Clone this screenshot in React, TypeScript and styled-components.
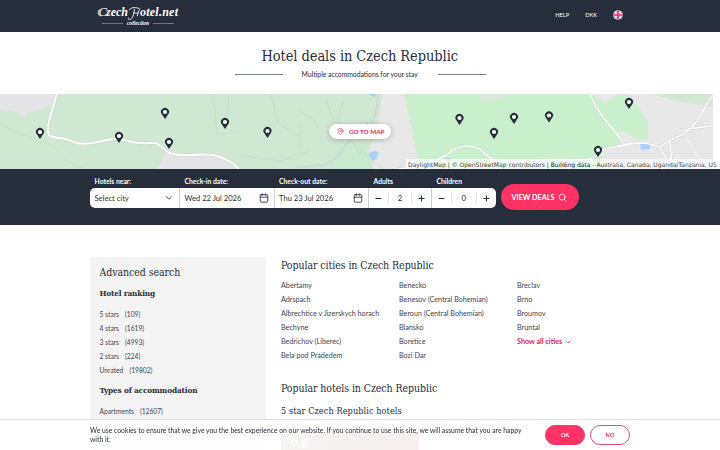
import React from "react";
import styled, { createGlobalStyle } from "styled-components";
import { FiCalendar, FiChevronDown, FiMapPin, FiSearch } from "react-icons/fi";

const navy = "#262d3b";
const pink = "#ff3366";
const serif = `"DejaVu Serif Condensed", "DejaVu Serif", serif`;
const sans = `Lato, "Open Sans", sans-serif`;

const GlobalStyle = createGlobalStyle`
  * {
    box-sizing: border-box;
  }
  body {
    margin: 0;
    height: 450px;
    overflow: hidden;
    background: #fff;
    color: ${navy};
    font-family: ${sans};
    font-size: 7px;
  }
  h1, h2, h3, p, ul {
    margin: 0;
    padding: 0;
    font-weight: 400;
  }
  ul {
    list-style: none;
  }
`;

const Page = styled.div`
  width: 720px;
  height: 450px;
  overflow: hidden;
`;

const Header = styled.header`
  display: flex;
  justify-content: space-between;
  height: 32px;
  padding: 0 97px 0 90px;
  background: ${navy};
`;

const Logo = styled.svg`
  width: 100px;
  height: 32px;
`;

const Nav = styled.nav`
  display: flex;
  align-items: center;
  height: 30px;
  gap: 16px;
  color: #fff;
  font-size: 5.7px;

  span {
    padding-bottom: 1px;
  }
`;

const Flag = styled.svg`
  width: 10px;
  height: 10px;
`;

const Hero = styled.section`
  display: flex;
  flex-direction: column;
  align-items: center;
  height: 62px;
  padding-top: 12px;
`;

const Title = styled.h1`
  width: 197px;
  height: 24px;
  line-height: 24px;
  font-family: ${serif};
  font-stretch: 75%;
  font-size: 14.5px;
  letter-spacing: -0.08px;
  white-space: nowrap;
`;

const Subtitle = styled.div`
  display: flex;
  align-items: center;
  gap: 19px;
  height: 12px;
  padding-top: 1px;
  font-size: 6.8px;

  span {
    width: 117px;
    padding-bottom: 1px;
    white-space: nowrap;
  }

  &::before,
  &::after {
    content: "";
    width: 48px;
    height: 1px;
    background: #777c84;
  }
`;

const MapArea = styled.section`
  position: relative;
  height: 75px;
  overflow: hidden;
`;

const MapDrawing = styled.svg`
  display: block;
`;

const MapButton = styled.button`
  position: absolute;
  left: 329px;
  top: 30px;
  display: flex;
  align-items: center;
  gap: 5px;
  width: 62px;
  height: 15px;
  padding: 0 0 0 8px;
  border: 0;
  border-radius: 8px;
  background: #fff;
  box-shadow: 0 1px 5px rgba(0, 0, 0, 0.25);
  color: #dc2855;
  font: 700 6.3px ${sans};
  white-space: nowrap;
`;

const Attribution = styled.div`
  position: absolute;
  right: 0;
  bottom: 0;
  width: 314px;
  height: 10px;
  padding-left: 2px;
  background: rgba(255, 255, 255, 0.65);
  color: #444;
  font: 6.05px/11px "DejaVu Sans", sans-serif;
  letter-spacing: -0.025px;
  white-space: nowrap;

  b {
    color: #111;
    font-weight: 400;
  }
`;

const SearchBar = styled.section`
  display: flex;
  gap: 5px;
  height: 56px;
  padding: 6px 0 0 90px;
  background: ${navy};
`;

const Fields = styled.div`
  display: flex;
`;

const Field = styled.div<{ $width: number }>`
  width: ${(p) => p.$width}px;

  &:first-child > div {
    border-radius: 5px 0 0 5px;
  }
  &:last-child > div {
    border-radius: 0 5px 5px 0;
    border-right: 0;
  }
`;

const Label = styled.label`
  display: block;
  height: 13px;
  padding-left: 4.5px;
  color: #fff;
  font-size: 6.8px;
  font-weight: 700;
  line-height: 13px;
  white-space: nowrap;
`;

const Input = styled.div`
  display: flex;
  align-items: center;
  justify-content: space-between;
  height: 20px;
  padding: 0 5px 0 4.5px;
  border-right: 1px solid #ccd0d8;
  background: #fff;
  font-size: 7.6px;
  white-space: nowrap;

  svg {
    flex: none;
  }
`;

const Stepper = styled(Input)`
  padding: 0;
`;

const Step = styled.span`
  display: flex;
  justify-content: center;
  width: 19px;
`;

const Count = styled.span`
  flex: 1;
  height: 12px;
  border: solid #e5e7ea;
  border-width: 0 1px;
  line-height: 12px;
  text-align: center;
`;

const DealsButton = styled.button`
  display: flex;
  align-items: center;
  justify-content: center;
  gap: 4px;
  width: 78px;
  height: 26px;
  margin-top: 9px;
  padding: 0;
  border: 0;
  border-radius: 13px;
  background: ${pink};
  color: #fff;
  font: 700 7.2px ${sans};
  white-space: nowrap;
`;

const Content = styled.main`
  display: flex;
  gap: 15px;
  height: 225px;
  padding: 32px 90px 0;
`;

const Sidebar = styled.aside`
  width: 176px;
  padding: 7px 9.5px 0;
  background: #f4f4f5;
`;

const Heading = styled.h2`
  height: 16px;
  line-height: 16px;
  font-family: ${serif};
  font-stretch: 75%;
  font-size: 10.5px;
  letter-spacing: -0.07px;
  white-space: nowrap;
`;

const Filter = styled.h3`
  height: 14px;
  margin: 6px 0 7px;
  line-height: 14px;
  font-family: ${serif};
  font-stretch: 75%;
  font-size: 8.2px;
  font-weight: 700;
  letter-spacing: -0.17px;
  white-space: nowrap;
`;

const FilterRow = styled.li`
  display: flex;
  gap: 6px;
  height: 14px;
  color: #3e444f;
  font-size: 6.7px;
  line-height: 14px;
`;

const Main = styled.div`
  width: 349px;
`;

const Cities = styled.div`
  display: grid;
  grid-template-columns: 118px 118px 1fr;
  margin: 6px 0 17px;
`;

const City = styled.li`
  height: 14px;
  color: #3e444f;
  font-size: 7.2px;
  line-height: 14px;
  white-space: nowrap;
`;

const ShowAll = styled(City)`
  display: flex;
  align-items: center;
  gap: 2px;
  color: #dc2855;
  font-weight: 700;
`;

const HotelHeading = styled.h3`
  height: 14px;
  margin-top: 8px;
  line-height: 14px;
  font-family: ${serif};
  font-stretch: 75%;
  font-size: 9.1px;
  letter-spacing: 0.07px;
`;

const HotelCard = styled.div`
  width: 138px;
  height: 30px;
  margin-top: 15px;
  padding: 3px 10px;
  background: linear-gradient(90deg, #c9b6b3, #b9948e);
  color: #fff;
  font-size: 12px;
  font-weight: 700;
  line-height: 13px;
`;

const CookieBar = styled.div`
  position: fixed;
  left: 0;
  right: 0;
  bottom: 0;
  display: flex;
  gap: 5px;
  height: 31px;
  padding: 5px 90px;
  border-top: 1px solid #dedfe1;
  background: rgba(255, 255, 255, 0.85);

  p {
    flex: none;
    width: 450px;
    padding-top: 1px;
    font-size: 6.8px;
    line-height: 9px;
    white-space: nowrap;
  }
`;

const CookieButton = styled.button<{ $primary?: boolean }>`
  flex: none;
  width: 40px;
  height: 20px;
  padding: 0 0 1px;
  border: 1px solid ${(p) => (p.$primary ? pink : "#de4f75")};
  border-radius: 10px;
  background: ${(p) => (p.$primary ? pink : "#fff")};
  color: ${(p) => (p.$primary ? "#fff" : "#dc2855")};
  font: 700 5.7px ${sans};
`;

const pins = [
  [40, 39], [119, 43], [165, 19], [169, 49], [225, 29], [267.5, 38],
  [459.5, 25], [494, 39], [514, 24], [549, 22.5], [598, 57], [629, 9],
];

const rankings = [
  ["5 stars", 109], ["4 stars", 1619], ["3 stars", 4993],
  ["2 stars", 224], ["Unrated", 19802],
];

const cities = [
  ["Abertamy", "Adrspach", "Albrechtice v Jizerskych horach", "Bechyne", "Bedrichov (Liberec)", "Bela pod Pradedem"],
  ["Benecko", "Benesov (Central Bohemian)", "Beroun (Central Bohemian)", "Blansko", "Boretice", "Bozi Dar"],
  ["Breclav", "Brno", "Broumov", "Bruntal"],
];

const mainRoad =
  "M57 0c-5 17-12 35-8 41 4 4 15 1 25 7 12 5 28-2 38-3 15-2 15 6 38 4 12-2 11 9 24 11 14 3 32-2 43 2 18 6 18 10 22 13";
const eastRoads =
  "M398 75c25-3 38-7 51-16 11-9 24-8 32-3 8 7 9 11 26 11l70-1c22 2 20-12 33-12 12-3 24-6 36-5l14 4c8-5 12-9 22-12 17-10 17-22 32-41M590 0c10 25 24 33 33 49M681 37c9-3 20-4 32-5M659 52c4 7 8 12 12 23M670 48l2 27";

const SiteLogo = () => (
  <Logo viewBox="0 0 100 32" fill="#fff" fontFamily="Liberation Serif" fontStyle="italic">
    <text x="8.5" y="16.2" fontSize="12.5" textLength="7">C</text>
    <text x="16" y="16.2" fontSize="12" fontWeight="700" textLength="22">zech</text>
    <text x="50" y="16.2" fontSize="12" fontWeight="700" textLength="38">otel.net</text>
    <path
      d="M10 9.5c-3 1.5-2 6 1 6.5M39 10c3-3.5 7-2.5 10-1.5M44.5 9c-1 5-1.5 10.5-5 10.5-1.5 0-1.5-1.5-.5-2M50 8.5c-1.500 3-2.500 5-2.800 7.700M43.500 13h5"
      fill="none"
      stroke="#fff"
      strokeWidth=".9"
    />
    <path d="M12 23.5h21M63 23.5h21" stroke="#a6abb4" strokeWidth=".6" />
    <text x="37" y="25.3" fontSize="5.4" fontWeight="700" textLength="22">collection</text>
  </Logo>
);

const MapView = () => (
  <MapDrawing width="720" height="75" viewBox="0 0 720 75">
    <path fill="#e7e7e8" d="M0 0h713v75H0z" />
    <path fill="#d0e7d2" d="M0 0h382l-4 34-8 20-6 21H0z" />
    <path fill="#e4e4e6" d="M0 0h57l-4 9-11 6-13 3-5 5-8-5-16-2z" />
    <path fill="#e4e4e6" d="M166 58l8 2c14 3 32-2 43 2 18 6 18 10 22 13h-82z" />
    <path fill="#caefcc" d="M405 0h185l33 49-20 8-5 18H421l-7-28z" />
    <path fill="#caefcc" d="M590 0l11 5 3 4 14-8h12l18 27v18l-11-1-14-8-9 3-5 8z" />
    <path fill="#d9e6da" d="M481 0h28l-10 6-19 3z" />
    <path fill="#c9ebcd" d="M336 58l24-12 12 22 1 7h-43z" />
    <path fill="#d2e7d4" d="M652 0h61v13l-32-5z" />
    <path fill="#a9d3fb" d="M368 0h9l-3 3zM363 31l4-3 3 4-6 3zM368 60l6-3 5 1-2 7-5 2zM640 50h10v5l-9 1zM445 64h6v3h-6z" />
    <g fill="none" stroke="#c0dec5" strokeWidth=".7">
      <path d="M213 0l4 40 23-2M229 0l-2 30M271 0l7 29 23 14M298 16l18 12 2 7M300 30v24M326 6l12 30 45 39M240 61l40 6 30-10M344 8l-7 17 24 36" />
      <path d="M0 29l10 7 40 14 18 18 15 6" opacity=".5" />
    </g>
    <path d="M378 0c-1 22-5 34-23 43-7 4-12 10-18 20-8 11-30 9-41 10" fill="none" stroke="#c9d8dc" strokeWidth="1.6" />
    <g fill="none" strokeLinejoin="round">
      <path d={mainRoad} stroke="#cbcfc5" strokeWidth="3" />
      <path d={mainRoad} stroke="#fff" strokeWidth="2" />
      <path d={eastRoads} stroke="#cbd0ca" strokeWidth="2.4" />
      <path d={eastRoads} stroke="#fff" strokeWidth="1.6" />
      <path d="M687 45l19 30" stroke="#f7f7f7" />
    </g>
    {pins.map(([x, y]) => (
      <g key={x} transform={`translate(${x} ${y})`}>
        <path d="M0 6l-3-4.5A4 4 0 1 1 3 1.5z" fill={navy} />
        <circle cy="-1" r="2.1" fill="#fff" />
      </g>
    ))}
  </MapDrawing>
);

const Guests = ({ count }: { count: number }) => (
  <Stepper>
    <Step>
      <svg width="7" height="7"><path d="M.5 3.5h6" stroke={navy} /></svg>
    </Step>
    <Count>{count}</Count>
    <Step>
      <svg width="7" height="7"><path d="M.5 3.5h6M3.5.5v6" stroke={navy} /></svg>
    </Step>
  </Stepper>
);

const App: React.FunctionComponent = () => {
  return (
    <Page>
      <GlobalStyle />
      <Header>
        <SiteLogo />
        <Nav>
          <span>HELP</span>
          <span>DKK</span>
          <Flag viewBox="0 0 10 10">
            <circle cx="5" cy="5" r="5" fill="#7984ab" />
            <path d="M1.5 1.5l7 7M8.5 1.5l-7 7" stroke="#e8e8f0" strokeWidth="1.5" />
            <path d="M5 .5v9M.5 5h9" stroke="#f3dfe7" strokeWidth="3" />
            <path d="M5 .5v9M.5 5h9" stroke="#e0315a" strokeWidth="1.6" />
          </Flag>
        </Nav>
      </Header>
      <Hero>
        <Title>Hotel deals in Czech Republic</Title>
        <Subtitle>
          <span>Multiple accommodations for your stay</span>
        </Subtitle>
      </Hero>
      <MapArea>
        <MapView />
        <MapButton>
          <FiMapPin size={7} />
          GO TO MAP
        </MapButton>
        <Attribution>
          DaylightMap | © OpenStreetMap contributors | <b>Building data</b> - Australia, Canada, Uganda/Tanzania, US
        </Attribution>
      </MapArea>
      <SearchBar>
        <Fields>
          <Field $width={90}>
            <Label>Hotels near:</Label>
            <Input>Select city <FiChevronDown size={10} /></Input>
          </Field>
          <Field $width={94.5}>
            <Label>Check-in date:</Label>
            <Input>Wed 22 Jul 2026 <FiCalendar size={10} /></Input>
          </Field>
          <Field $width={94.5}>
            <Label>Check-out date:</Label>
            <Input>Thu 23 Jul 2026 <FiCalendar size={10} /></Input>
          </Field>
          <Field $width={63}>
            <Label>Adults</Label>
            <Guests count={2} />
          </Field>
          <Field $width={63.5}>
            <Label>Children</Label>
            <Guests count={0} />
          </Field>
        </Fields>
        <DealsButton>
          VIEW DEALS <FiSearch size={9} />
        </DealsButton>
      </SearchBar>
      <Content>
        <Sidebar>
          <Heading>Advanced search</Heading>
          <Filter>Hotel ranking</Filter>
          <ul>
            {rankings.map(([name, total]) => (
              <FilterRow key={name}>
                <span>{name}</span>
                <span>({total})</span>
              </FilterRow>
            ))}
          </ul>
          <Filter>Types of accommodation</Filter>
          <ul>
            <FilterRow>
              <span>Apartments</span>
              <span>(12607)</span>
            </FilterRow>
          </ul>
        </Sidebar>
        <Main>
          <Heading>Popular cities in Czech Republic</Heading>
          <Cities>
            {cities.map((column, i) => (
              <ul key={i}>
                {column.map((city) => (
                  <City key={city}>{city}</City>
                ))}
                {i === 2 && (
                  <ShowAll>
                    Show all cities <FiChevronDown size={8} />
                  </ShowAll>
                )}
              </ul>
            ))}
          </Cities>
          <Heading>Popular hotels in Czech Republic</Heading>
          <HotelHeading>5 star Czech Republic hotels</HotelHeading>
          <HotelCard>9.6</HotelCard>
        </Main>
      </Content>
      <CookieBar>
        <p>
          We use cookies to ensure that we give you the best experience on our website. If you continue to use this site, we will assume that you are happy
          <br />
          with it.
        </p>
        <CookieButton $primary>OK</CookieButton>
        <CookieButton>NO</CookieButton>
      </CookieBar>
    </Page>
  );
};

export default App;
